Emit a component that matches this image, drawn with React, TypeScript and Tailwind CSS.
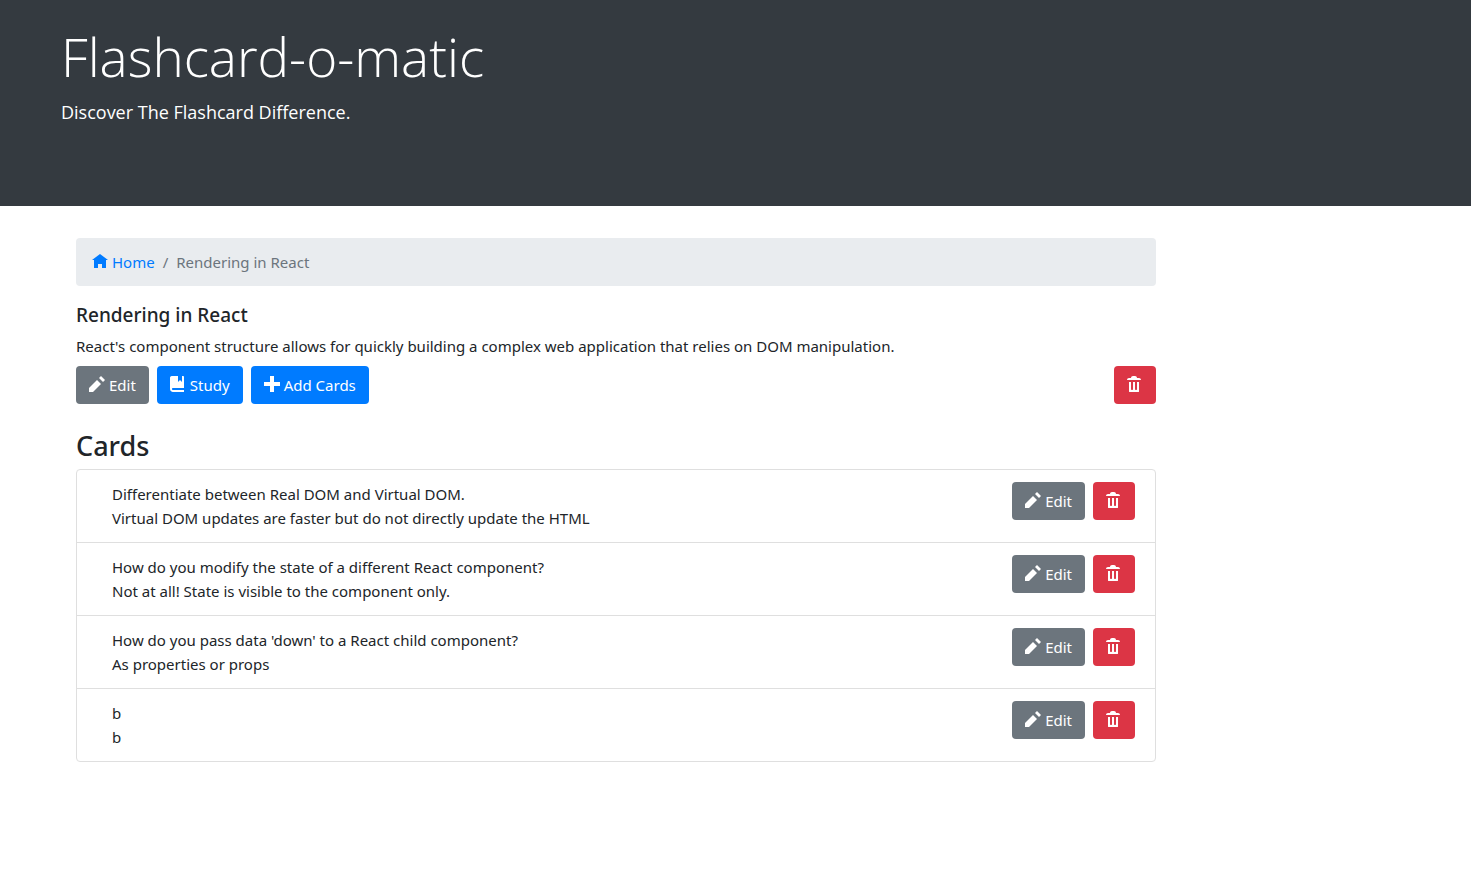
import React from "react";

const ICONS = {
  home: "M4 0l-4 3h1v4h2v-2h2v2h2v-4.03l1 .03-4-3z",
  pencil: "M6 0l-1 1 2 2 1-1-2-2zm-2 2l-4 4v2h2l4-4-2-2z",
  book: "M1 0c-.07 0-.13.01-.19.03-.39.08-.7.39-.78.78-.03.06-.03.12-.03.19v5.5c0 .83.67 1.5 1.5 1.5h5.5v-1h-5.5c-.28 0-.5-.22-.5-.5s.22-.5.5-.5h5.5v-5.5c0-.28-.22-.5-.5-.5h-.5v3l-1-1-1 1v-3h-3z",
  plus: "M3 0v3h-3v2h3v3h2v-3h3v-2h-3v-3h-2z",
  trash:
    "M3 0c-.55 0-1 .45-1 1h-1c-.55 0-1 .45-1 1h7c0-.55-.45-1-1-1h-1c0-.55-.45-1-1-1h-1zm-2 3v4.81c0 .11.08.19.19.19h4.63c.11 0 .19-.08.19-.19v-4.81h-1v3.5c0 .28-.22.5-.5.5s-.5-.22-.5-.5v-3.5h-1v3.5c0 .28-.22.5-.5.5s-.5-.22-.5-.5v-3.5h-1z",
};

function Icon({ name }: { name: keyof typeof ICONS }) {
  return (
    <svg viewBox="0 0 8 8" className="size-4 shrink-0" fill="currentColor" aria-hidden="true">
      <path d={ICONS[name]} />
    </svg>
  );
}

const buttonBase =
  "flex h-[38px] items-start gap-1 rounded-sm px-[13px] pt-[10px] text-[15px] leading-[19px] text-white";

function EditButton() {
  return (
    <button type="button" className={`${buttonBase} bg-[#6c757d]`}>
      <Icon name="pencil" />
      Edit
    </button>
  );
}

function DeleteButton({ label }: { label: string }) {
  return (
    <button type="button" aria-label={label} className={`${buttonBase} bg-[#dc3545]`}>
      <Icon name="trash" />
    </button>
  );
}

const cards = [
  {
    front: "Differentiate between Real DOM and Virtual DOM.",
    back: "Virtual DOM updates are faster but do not directly update the HTML",
  },
  {
    front: "How do you modify the state of a different React component?",
    back: "Not at all! State is visible to the component only.",
  },
  {
    front: "How do you pass data 'down' to a React child component?",
    back: "As properties or props",
  },
  { front: "b", back: "b" },
];

export default function App() {
  return (
    <div className="min-h-screen bg-white font-['Noto_Sans','Open_Sans',sans-serif] text-[15px] leading-6 text-[#212529]">
      <header className="bg-[#343a40] px-[61px] pt-6 pb-[78px] font-['Open_Sans',sans-serif] text-white">
        <h1 className="text-[53px] leading-[66px] font-light">Flashcard-o-matic</h1>
        <p className="mt-[6px] text-[18px] leading-8">Discover The Flashcard Difference.</p>
      </header>

      <main className="ml-[61px] max-w-[1110px] px-[15px] pt-8">
        <nav aria-label="Breadcrumb" className="rounded-sm bg-[#e9ecef] px-4 py-3">
          <ol className="flex gap-2">
            <li>
              <a href="#home" className="flex items-center gap-1 text-[#007bff]">
                <Icon name="home" />
                Home
              </a>
            </li>
            <li aria-hidden="true" className="text-[#6c757d]">/</li>
            <li aria-current="page" className="text-[#6c757d]">Rendering in React</li>
          </ol>
        </nav>

        <section className="mt-4">
          <h2 className="text-[19px] leading-[26px] font-medium">Rendering in React</h2>
          <p className="mt-[6px]">
            React's component structure allows for quickly building a complex web application that relies on DOM
            manipulation.
          </p>
          <div className="mt-2 flex gap-2">
            <EditButton />
            <button type="button" className={`${buttonBase} bg-[#007bff]`}>
              <Icon name="book" />
              Study
            </button>
            <button type="button" className={`${buttonBase} bg-[#007bff]`}>
              <Icon name="plus" />
              Add Cards
            </button>
            <div className="ml-auto">
              <DeleteButton label="Delete deck" />
            </div>
          </div>
        </section>

        <section className="mt-6">
          <h2 className="text-[27px] leading-9 font-medium">Cards</h2>
          <ul className="mt-[5px] divide-y divide-[#dfdfdf] rounded-sm border border-[#dfdfdf]">
            {cards.map((card) => (
              <li key={card.front} className="flex items-start gap-2 py-3 pr-5 pl-[35px]">
                <div className="mr-auto">
                  <p>{card.front}</p>
                  <p>{card.back}</p>
                </div>
                <EditButton />
                <DeleteButton label="Delete card" />
              </li>
            ))}
          </ul>
        </section>
      </main>
    </div>
  );
}
